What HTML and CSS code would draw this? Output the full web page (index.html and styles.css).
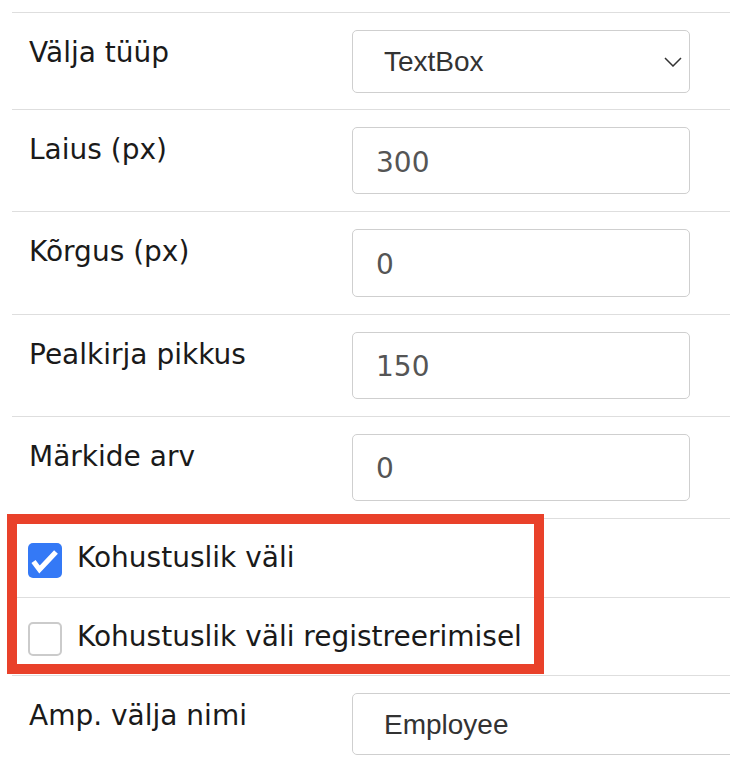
FILE: index.html
```html
<!DOCTYPE html>
<html lang="et">
<head>
<meta charset="utf-8">
<title>Välja seaded</title>
<link rel="stylesheet" href="styles.css">
</head>
<body>
<div class="form">
  <div class="row row-select">
    <div class="label">Välja tüüp</div>
    <div class="field">
      <div class="select-wrap">
        <select class="select"><option>TextBox</option></select>
        <svg class="chev" width="18" height="10" viewBox="0 0 18 10"><polyline points="1,1 9,9 17,1" fill="none" stroke="#333" stroke-width="1.5"/></svg>
      </div>
    </div>
  </div>
  <div class="row">
    <div class="label">Laius (px)</div>
    <div class="field"><input class="input" type="text" value="300"></div>
  </div>
  <div class="row">
    <div class="label">Kõrgus (px)</div>
    <div class="field"><input class="input" type="text" value="0"></div>
  </div>
  <div class="row">
    <div class="label">Pealkirja pikkus</div>
    <div class="field"><input class="input" type="text" value="150"></div>
  </div>
  <div class="row">
    <div class="label">Märkide arv</div>
    <div class="field"><input class="input" type="text" value="0"></div>
  </div>
  <div class="row check-row">
    <span class="cb cb-on"><svg width="34" height="35" viewBox="0 0 34 35"><polyline points="5.5,18.5 11.5,26.5 28,9" fill="none" stroke="#fff" stroke-width="5.2" stroke-linejoin="miter"/></svg></span>
    <span class="cb-label">Kohustuslik väli</span>
  </div>
  <div class="row check-row">
    <span class="cb cb-off"></span>
    <span class="cb-label">Kohustuslik väli registreerimisel</span>
  </div>
  <div class="row row-last">
    <div class="label">Amp. välja nimi</div>
    <div class="field field-clip"><select class="select select-wide"><option>Employee</option></select></div>
  </div>
</div>
<div class="highlight"></div>
</body>
</html>
```
FILE: styles.css
```css
html, body {
  overflow: hidden;
}
body {
  margin: 0;
  background: #fff;
  position: relative;
  width: 730px;
  height: 782px;
  font-family: "DejaVu Sans", Verdana, sans-serif;
  font-size: 28px;
  color: #1a1a1a;
}
.form {
  margin: 12px 0 0 12px;
}
.row {
  display: grid;
  grid-template-columns: 340px 1fr;
  border-top: 1px solid #dedede;
  padding: 17px 0 17px 0;
}
.row-select {
  padding-bottom: 16px;
}
.label {
  padding: 6px 0 0 17px;
  line-height: 34px;
  white-space: nowrap;
}
.field {
  min-width: 0;
}
.field-clip {
  overflow: hidden;
}
.select-wrap {
  position: relative;
  width: 338px;
}
.select {
  -webkit-appearance: none;
  appearance: none;
  display: block;
  box-sizing: border-box;
  width: 338px;
  height: 63px;
  margin: 0;
  padding: 0 0 0 31px;
  border: 1px solid #cfcfcf;
  border-radius: 5px;
  background: #fff;
  font-family: "Liberation Sans", Arial, sans-serif;
  font-size: 28px;
  color: #333;
  outline: none;
}
.chev {
  position: absolute;
  right: 8px;
  top: 27px;
  pointer-events: none;
}
.input {
  display: block;
  box-sizing: border-box;
  width: 338px;
  height: 67.25px;
  margin: 0;
  padding: 3px 0 0 23px;
  border: 1px solid #cfcfcf;
  border-radius: 5px;
  background: #fff;
  font-family: "DejaVu Sans", Verdana, sans-serif;
  font-size: 28px;
  color: #555;
  outline: none;
}
.check-row {
  display: flex;
  align-items: flex-start;
  padding: 24px 0 19px 16px;
}
.cb {
  box-sizing: border-box;
  flex: none;
  width: 34px;
  height: 35px;
  border-radius: 5px;
  margin-right: 15px;
}
.cb svg {
  display: block;
}
.cb-on {
  background: #3479f6;
}
.cb-off {
  height: 34px;
  border: 2.5px solid #cbcbcb;
  background: #fff;
}
.cb-label {
  line-height: 30px;
  white-space: nowrap;
}
.row-last {
  padding-bottom: 40px;
}
.select-wide {
  width: 420px;
  height: 62px;
}
.highlight {
  position: absolute;
  left: 7px;
  top: 514px;
  width: 517px;
  height: 140px;
  border: 10px solid #e9412a;
  pointer-events: none;
}
```
